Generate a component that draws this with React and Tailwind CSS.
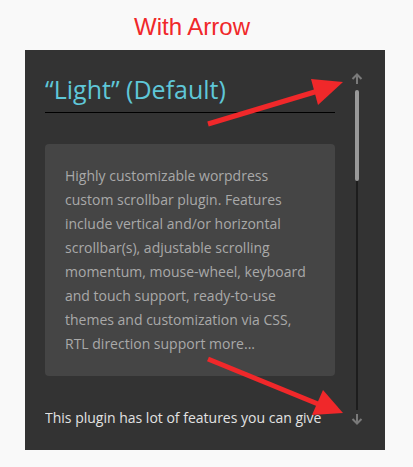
import React from "react";

function ArrowUp() {
  return (
    <svg width="12" height="11" viewBox="0 0 12 11" fill="none" stroke="#7a7a7a" strokeWidth="2">
      <path d="M6 11V2" />
      <path d="M1.5 6L6 1.5L10.5 6" />
    </svg>
  );
}

function ArrowDown() {
  return (
    <svg width="12" height="11" viewBox="0 0 12 11" fill="none" stroke="#7a7a7a" strokeWidth="2">
      <path d="M6 0V9" />
      <path d="M1.5 5L6 9.5L10.5 5" />
    </svg>
  );
}

export default function App() {
  return (
    <div className="relative w-[413px] h-[467px] bg-[#f9f9f9] overflow-hidden" style={{ fontFamily: '"Open Sans", sans-serif' }}>
      <div className="h-[50px] pl-[134px] pt-[13px]">
        <span className="text-[24px] leading-[28px] text-[#f0282a]" style={{ fontFamily: '"Liberation Sans", Arial, sans-serif' }}>
          With Arrow
        </span>
      </div>
      <div className="ml-[25px] w-[360px] h-[400px] bg-[#333333] flex flex-row pb-[20px]">
        <div className="ml-[20px] w-[290px] h-full overflow-hidden pt-[23px]">
          <h2 className="text-[25px] leading-[32px] text-[#5fc7d8] pb-[7px] border-b border-black">
            “Light” (Default)
          </h2>
          <div className="mt-[31px] bg-[#454545] rounded-[4px] p-[20px] text-[14px] leading-[24px] text-[#a9a9a9]">
            Highly customizable worpdress custom scrollbar plugin. Features include vertical and/or horizontal scrollbar(s), adjustable scrolling momentum, mouse-wheel, keyboard and touch support, ready-to-use themes and customization via CSS, RTL direction support more...
          </div>
          <p className="mt-[30px] text-[14px] leading-[24px] text-[#e2e2e2] whitespace-nowrap">
            This plugin has lot of features you can give
          </p>
        </div>
        <div className="ml-[16px] w-[12px] flex flex-col items-center pt-[23px]">
          <ArrowUp />
          <div className="mt-[6px] w-[4px] h-[91px] rounded-[2px] bg-[#9a9a9a]" />
          <div className="w-[2px] h-[229px] bg-[#1d1d1d]" />
          <div className="mt-[4px]">
            <ArrowDown />
          </div>
        </div>
      </div>
      <svg className="absolute left-0 top-0 pointer-events-none" width="413" height="467" viewBox="0 0 413 467">
        <line x1="208" y1="124" x2="318" y2="91" stroke="#f0282a" strokeWidth="5" />
        <polygon points="311,79 343,82 318,105" fill="#f0282a" />
        <line x1="208" y1="359" x2="318" y2="404" stroke="#f0282a" strokeWidth="5" />
        <polygon points="323,390 343,413 312,415" fill="#f0282a" />
      </svg>
    </div>
  );
}
